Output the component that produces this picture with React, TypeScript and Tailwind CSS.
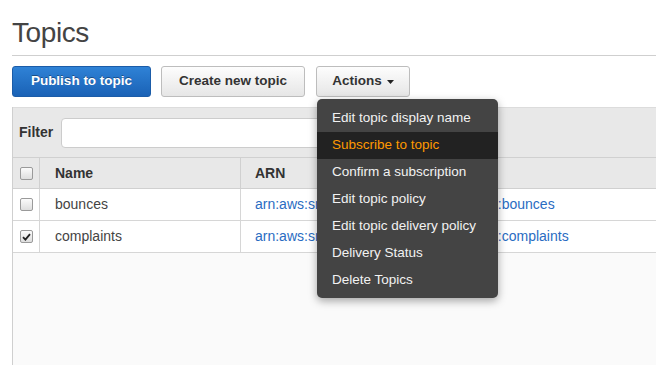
import { useState } from 'react'

const topics = [
  { name: 'bounces', arn: 'arn:aws:sns:ap-south-1:123456789012:bounces', checked: false },
  { name: 'complaints', arn: 'arn:aws:sns:ap-south-1:123456789012:complaints', checked: true },
]

const actions = [
  'Edit topic display name',
  'Subscribe to topic',
  'Confirm a subscription',
  'Edit topic policy',
  'Edit topic delivery policy',
  'Delivery Status',
  'Delete Topics',
]

function Checkbox({ checked }: { checked?: boolean }) {
  return (
    <div className="w-[13px] h-[13px] rounded-[2px] border border-[#9a9a9a] bg-gradient-to-b from-[#fbfbfb] to-[#dedede] flex items-center justify-center">
      {checked && (
        <svg width="9" height="8" viewBox="0 0 9 8">
          <path d="M1 4.2 L3.4 6.6 L8 1.2" fill="none" stroke="#222" strokeWidth="1.8" />
        </svg>
      )}
    </div>
  )
}

export default function App() {
  const [hovered] = useState(1)

  return (
    <div className="w-[656px] h-[365px] overflow-hidden bg-white pl-3 font-['Liberation_Sans',Arial,sans-serif] text-[#333]">
      {/* Header */}
      <h1 className="pt-[17px] pb-[6px] border-b border-[#cfcfcf] text-[28px] leading-[32px] tracking-[-0.4px] text-[#444]">
        Topics
      </h1>

      {/* Toolbar */}
      <div className="flex items-center mt-[10px] h-[31px]">
        <button className="w-[139px] h-[31px] rounded-[3px] border border-[#1b5ca8] bg-gradient-to-b from-[#2f82d6] to-[#1a62b6] text-white text-[13.5px] font-bold [text-shadow:0_-1px_0_rgba(0,0,0,0.35)]">
          Publish to topic
        </button>
        <button className="ml-[10px] w-[144px] h-[31px] rounded-[3px] border border-[#bdbdbd] bg-gradient-to-b from-[#fdfdfd] to-[#e6e6e6] text-[#333] text-[13.5px] font-bold">
          Create new topic
        </button>
        <div className="relative ml-[11px]">
          <button className="w-[94px] h-[31px] rounded-[3px] border border-[#bdbdbd] bg-gradient-to-b from-[#fdfdfd] to-[#e6e6e6] text-[#333] text-[13.5px] font-bold flex items-center justify-center gap-[5px]">
            Actions
            <svg width="7" height="4" viewBox="0 0 7 4">
              <path d="M0 0 H7 L3.5 4 Z" fill="#222" />
            </svg>
          </button>

          {/* Dropdown menu */}
          <div className="absolute z-10 left-[1px] top-[33px] w-[181px] rounded-[5px] bg-[#444] pt-[6px] pb-[4px] shadow-[0_3px_8px_rgba(0,0,0,0.35)]">
            {actions.map((a, i) => (
              <div
                key={a}
                className={`h-[27px] pl-[15px] flex items-center text-[13.5px] whitespace-nowrap ${
                  i === hovered ? 'bg-[#222] text-[#ff9900]' : 'text-[#f2f2f2]'
                }`}
              >
                {a}
              </div>
            ))}
          </div>
        </div>
      </div>

      {/* Topics table */}
      <div className="mt-[10px] border-l border-[#cfcfcf] bg-[#fafafa] h-[260px]">
        <div className="h-[50px] bg-[#e8e8e8] border-t border-[#dcdcdc] flex items-center pl-[6px]">
          <span className="text-[14px] font-bold text-[#333]">Filter</span>
          <div className="ml-[8px] w-[420px] h-[30px] rounded-[4px] border border-[#cccccc] bg-white" />
        </div>

        <div className="grid grid-cols-[26px_201px_1fr] text-[14px]">
          <div className="h-[32px] bg-[#e8e8e8] border-t border-b border-[#d0d0d0] flex items-center justify-center">
            <Checkbox />
          </div>
          <div className="h-[32px] bg-[#e8e8e8] border-t border-b border-l border-[#d0d0d0] flex items-center pl-[15px] font-bold">
            Name
          </div>
          <div className="h-[32px] bg-[#e8e8e8] border-t border-b border-l border-[#d0d0d0] flex items-center pl-[14px] font-bold">
            ARN
          </div>

          {topics.map((t) => (
            <div key={t.name} className="contents">
              <div className="h-[32px] bg-white border-b border-[#d6d6d6] flex items-center justify-center">
                <Checkbox checked={t.checked} />
              </div>
              <div className="h-[32px] bg-white border-b border-l border-[#d6d6d6] flex items-center pl-[15px] text-[#444]">
                {t.name}
              </div>
              <div className="h-[32px] bg-white border-b border-l border-[#d6d6d6] flex items-center pl-[14px] text-[#2a6cc2] whitespace-nowrap">
                {t.arn}
              </div>
            </div>
          ))}
        </div>
      </div>
    </div>
  )
}
